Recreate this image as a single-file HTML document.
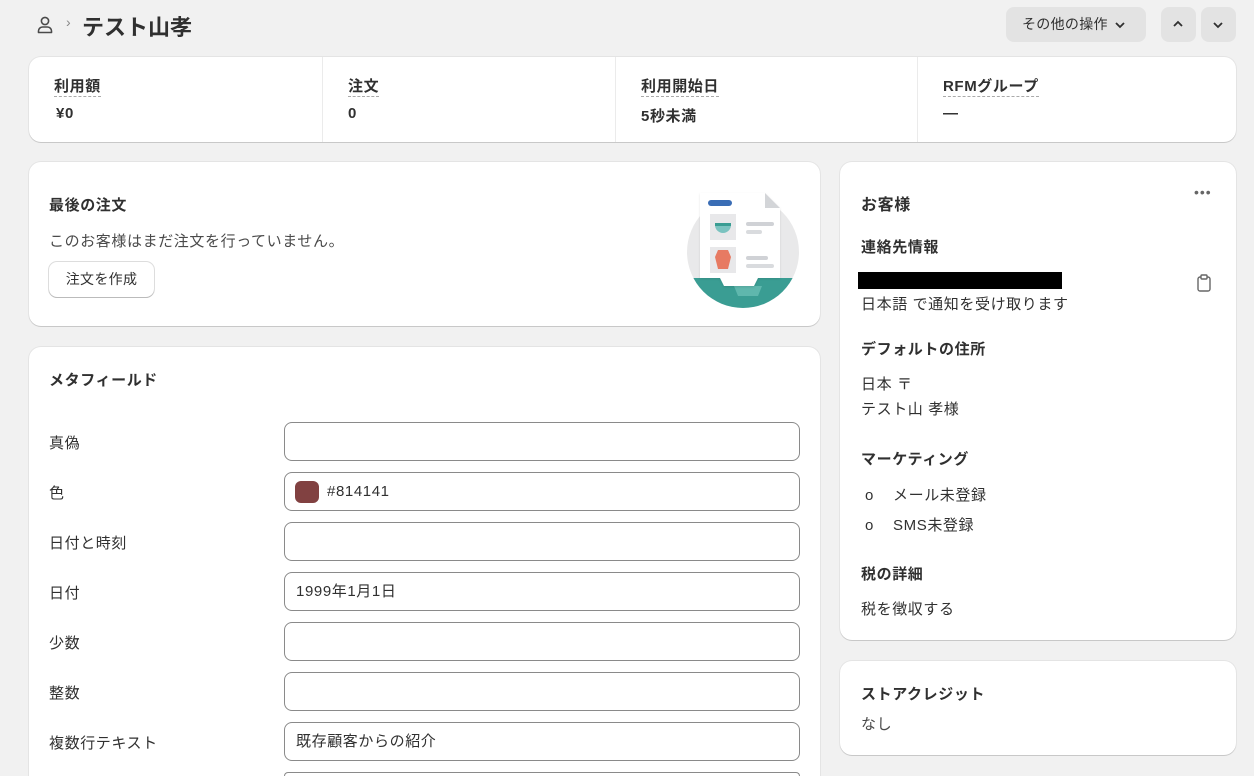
<!DOCTYPE html>
<html><head><meta charset="utf-8"><style>
*{box-sizing:border-box;margin:0;padding:0}
html{height:776px;overflow:hidden}
body{width:1254px;height:776px;overflow:hidden;background:#f1f1f1;font-family:"Liberation Sans","Noto Sans CJK JP",sans-serif;font-size:15px;letter-spacing:.6px;color:#303030;position:relative}
.abs{position:absolute}
.card{position:absolute;background:#fff;border-radius:12px;box-shadow:0 1px 0 rgba(0,0,0,.12),0 0 0 1px rgba(0,0,0,.05);overflow:hidden}
.b{font-weight:bold}
.dot{border-bottom:1px dashed #aaa;padding-bottom:1px}
.inp{position:absolute;left:284px;width:516px;height:39px;border:1px solid #8a8a8a;border-radius:8px;background:#fff;padding:0 11px;line-height:37px;font-size:15px}
.lbl{position:absolute;left:49px;font-size:15px}
.btn{position:absolute;background:#e3e3e3;border-radius:8px}
</style></head><body>
<svg class="abs" style="left:36px;top:15px" width="18" height="20" viewBox="0 0 18 20"><circle cx="9" cy="6" r="3.6" fill="none" stroke="#4a4a4a" stroke-width="1.6"/><path d="M2.5 17.5v-1.5a4 4 0 0 1 4-4h5a4 4 0 0 1 4 4v1.5z" fill="none" stroke="#4a4a4a" stroke-width="1.6" stroke-linejoin="round"/></svg>
<div class="abs" style="left:66px;top:14px;color:#888;font-size:14px">›</div>
<div class="abs b" style="left:82px;top:10px;font-size:22px;letter-spacing:0;color:#303030">テスト山孝</div>
<div class="btn" style="left:1006px;top:7px;width:140px;height:35px;font-size:14px;letter-spacing:.3px;line-height:35px;padding-left:16px">その他の操作 <svg style="vertical-align:middle;margin-left:2px" width="12" height="8" viewBox="0 0 12 8"><path d="M2 2l4 4 4-4" fill="none" stroke="#303030" stroke-width="1.8"/></svg></div>
<div class="btn" style="left:1161px;top:7px;width:35px;height:35px"><svg class="abs" style="left:11px;top:13px" width="12" height="8" viewBox="0 0 12 8"><path d="M2 6l4-4 4 4" fill="none" stroke="#303030" stroke-width="1.8"/></svg></div>
<div class="btn" style="left:1201px;top:7px;width:35px;height:35px"><svg class="abs" style="left:11px;top:14px" width="12" height="8" viewBox="0 0 12 8"><path d="M2 2l4 4 4-4" fill="none" stroke="#303030" stroke-width="1.8"/></svg></div>

<div class="card" style="left:29px;top:57px;width:1207px;height:85px">
<div class="abs" style="left:293px;top:0;width:1px;height:85px;background:#ebebeb"></div>
<div class="abs" style="left:586px;top:0;width:1px;height:85px;background:#ebebeb"></div>
<div class="abs" style="left:888px;top:0;width:1px;height:85px;background:#ebebeb"></div>
<div class="abs b" style="left:25px;top:18px"><span class="dot">利用額</span></div><div class="abs b" style="left:27px;top:48px">¥0</div>
<div class="abs b" style="left:319px;top:18px"><span class="dot">注文</span></div><div class="abs b" style="left:319px;top:48px">0</div>
<div class="abs b" style="left:612px;top:18px"><span class="dot">利用開始日</span></div><div class="abs b" style="left:612px;top:48px">5秒未満</div>
<div class="abs b" style="left:914px;top:18px"><span class="dot">RFMグループ</span></div><div class="abs b" style="left:914px;top:48px">—</div>
</div>

<div class="card" style="left:29px;top:162px;width:791px;height:164px">
<div class="abs b" style="left:20px;top:32px">最後の注文</div>
<div class="abs" style="left:20px;top:68px;color:#4a4a4a">このお客様はまだ注文を行っていません。</div>
<div class="abs" style="left:20px;top:100px;width:105px;height:35px;border-radius:8px;box-shadow:0 1px 0 #bbb,0 0 0 1px #ddd;text-align:center;line-height:34px;font-size:14px;letter-spacing:.3px">注文を作成</div>
<svg class="abs" style="left:655px;top:24px" width="120" height="124" viewBox="0 0 120 124">
<defs><clipPath id="c"><circle cx="59" cy="66" r="56"/></clipPath></defs>
<circle cx="59" cy="66" r="56" fill="#e9e9ea"/>
<rect x="0" y="92" width="120" height="40" fill="#3a9d93" clip-path="url(#c)"/>
<path d="M50 100h28l-4 10h-20z" fill="#5fb7ad"/>
<path d="M16 7h65l15 15v70h-22l-4 8h-30l-4-8h-20z" fill="#fff" filter="drop-shadow(0 1px 1px rgba(0,0,0,.1))"/>
<path d="M81 7v15h15z" fill="#d3d5d8"/>
<rect x="24" y="14" width="24" height="6" rx="3" fill="#3a6db5"/>
<rect x="26" y="28" width="26" height="26" fill="#e8e8ea"/>
<path d="M31 39h16a8 8 0 0 1-16 0z" fill="#7bc3c0"/><rect x="31" y="37" width="16" height="3" fill="#3a9d93"/>
<rect x="62" y="36" width="28" height="4" rx="2" fill="#d0d2d6"/><rect x="62" y="44" width="16" height="4" rx="2" fill="#d9dbde"/>
<rect x="26" y="61" width="26" height="26" fill="#e8e8ea"/>
<path d="M34 64h10l3 7-3 12h-10l-3-12z" fill="#e77a62"/>
<rect x="62" y="70" width="22" height="4" rx="2" fill="#d0d2d6"/><rect x="62" y="78" width="28" height="4" rx="2" fill="#d9dbde"/>
</svg>
</div>

<div class="card" style="left:29px;top:347px;width:791px;height:450px">
<div class="abs b" style="left:20px;top:22px">メタフィールド</div>
</div>
<div class="lbl" style="top:432px">真偽</div><div class="inp" style="top:422px"></div>
<div class="lbl" style="top:482px">色</div><div class="inp" style="top:472px;padding-left:42px">#814141<span class="abs" style="left:10px;top:8px;width:24px;height:22px;border-radius:6px;background:#814141"></span></div>
<div class="lbl" style="top:532px">日付と時刻</div><div class="inp" style="top:522px"></div>
<div class="lbl" style="top:582px">日付</div><div class="inp" style="top:572px">1999年1月1日</div>
<div class="lbl" style="top:632px">少数</div><div class="inp" style="top:622px"></div>
<div class="lbl" style="top:682px">整数</div><div class="inp" style="top:672px"></div>
<div class="lbl" style="top:732px">複数行テキスト</div><div class="inp" style="top:722px">既存顧客からの紹介</div>
<div class="inp" style="top:772px;height:4px;border-bottom:none;border-radius:8px 8px 0 0"></div>

<div class="card" style="left:840px;top:162px;width:396px;height:478px">
<div class="abs b" style="left:21px;top:29px;font-size:16px">お客様</div>
<div class="abs" style="left:354px;top:22px;color:#666;font-size:14px;letter-spacing:1px">•••</div>
<div class="abs b" style="left:21px;top:74px">連絡先情報</div>
<div class="abs" style="left:18px;top:110px;width:204px;height:17px;background:#000"></div>
<svg class="abs" style="left:356px;top:112px" width="16" height="18" viewBox="0 0 16 18"><rect x="2" y="3" width="12" height="14" rx="2" fill="none" stroke="#666" stroke-width="1.4"/><rect x="5" y="1" width="6" height="4" rx="1" fill="#fff" stroke="#666" stroke-width="1.4"/></svg>
<div class="abs" style="left:21px;top:131px">日本語 で通知を受け取ります</div>
<div class="abs b" style="left:21px;top:176px">デフォルトの住所</div>
<div class="abs" style="left:21px;top:211px">日本 〒</div>
<div class="abs" style="left:21px;top:236px">テスト山 孝様</div>
<div class="abs b" style="left:21px;top:286px">マーケティング</div>
<div class="abs" style="left:25px;top:322px">o&nbsp;&nbsp;&nbsp;&nbsp;メール未登録</div>
<div class="abs" style="left:25px;top:352px">o&nbsp;&nbsp;&nbsp;&nbsp;SMS未登録</div>
<div class="abs b" style="left:21px;top:401px">税の詳細</div>
<div class="abs" style="left:21px;top:436px">税を徴収する</div>
</div>

<div class="card" style="left:840px;top:661px;width:396px;height:94px">
<div class="abs b" style="left:21px;top:22px">ストアクレジット</div>
<div class="abs" style="left:21px;top:52px;color:#4a4a4a">なし</div>
</div>
</body></html>
